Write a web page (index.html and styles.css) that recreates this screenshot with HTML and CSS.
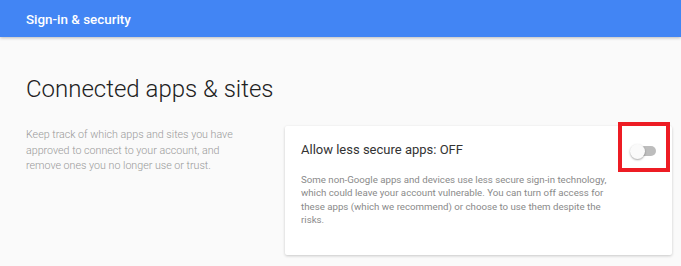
FILE: index.html
```html
<!DOCTYPE html>
<html lang="en">
<head>
    <meta charset="UTF-8">
    <meta name="viewport" content="width=device-width, initial-scale=1.0">
    <title>Sign-in &amp; security</title>
    <link rel="stylesheet" href="styles.css">
</head>
<body>
    <header class="top-bar">
        <span class="top-title">Sign-in &amp; security</span>
    </header>

    <main class="content">
        <h1 class="page-title">Connected apps &amp; sites</h1>

        <div class="section">
            <p class="section-desc">
                Keep track of which apps and sites you have approved to connect to your account, and remove ones you no longer use or trust.
            </p>

            <div class="card">
                <div class="card-head">
                    <span class="card-title">Allow less secure apps: OFF</span>
                    <div class="toggle">
                        <span class="toggle-track"></span>
                        <span class="toggle-thumb"></span>
                    </div>
                    <!-- highlight around the switch -->
                    <span class="highlight"></span>
                </div>
                <p class="card-text">
                    Some non-Google apps and devices use less secure sign-in technology, which could leave your account vulnerable. You can turn off access for these apps (which we recommend) or choose to use them despite the risks.
                </p>
            </div>
        </div>
    </main>
</body>
</html>
```

FILE: styles.css
```css
/* General Styles */
* {
    margin: 0;
    padding: 0;
    box-sizing: border-box;
    font-family: 'Roboto', 'Liberation Sans', sans-serif;
}

body {
    background-color: #fafafa;
    color: #212121;
    width: 681px;
    height: 266px;
    overflow: hidden;
}

.top-bar {
    height: 37px;
    background: #4285f4;
    display: flex;
    align-items: center;
    padding: 1px 0 0 26px;
    box-shadow: 0 1px 3px rgba(0, 0, 0, 0.25);
    position: relative;
    z-index: 2;
}

.top-title {
    color: white;
    font-size: 13.4px;
    font-weight: 500;
}

.content {
    padding: 0 9px 0 26px;
}

.page-title {
    font-size: 24px;
    font-weight: 300;
    color: #212121;
    margin-top: 38px;
    line-height: 28px;
}

.section {
    display: flex;
    align-items: flex-start;
    margin-top: 23px;
}

.section-desc {
    width: 259px;
    padding-right: 46px;
    font-size: 10.7px;
    line-height: 15.5px;
    color: #999;
    font-weight: 300;
    margin-top: 1px;
}

.card {
    flex: 1;
    height: 129px;
    background: white;
    box-shadow: 0 1px 3px rgba(0, 0, 0, 0.2);
    border-radius: 2px;
    padding: 13px 16px 0 16px;
}

.card-head {
    display: flex;
    align-items: center;
    justify-content: space-between;
    height: 20px;
    position: relative;
}

.card-title {
    font-size: 13px;
    color: #333;
}

.toggle {
    width: 26px;
    height: 15px;
    position: relative;
    margin-top: 4px;
}

.toggle-track {
    position: absolute;
    left: 4px;
    top: 2.5px;
    width: 22px;
    height: 10px;
    border-radius: 5px;
    background: #bdbdbd;
}

.toggle-thumb {
    position: absolute;
    left: 0;
    top: 0;
    width: 15px;
    height: 15px;
    border-radius: 50%;
    background: #fafafa;
    box-shadow: 0 1px 2px rgba(0, 0, 0, 0.35);
}

.highlight {
    position: absolute;
    right: -14px;
    top: -17px;
    width: 52px;
    height: 50px;
    border: 4px solid #ed1c24;
}

.card-text {
    margin-top: 14px;
    width: 310px;
    font-size: 9.7px;
    line-height: 13.3px;
    color: #8a8a8a;
}
```
